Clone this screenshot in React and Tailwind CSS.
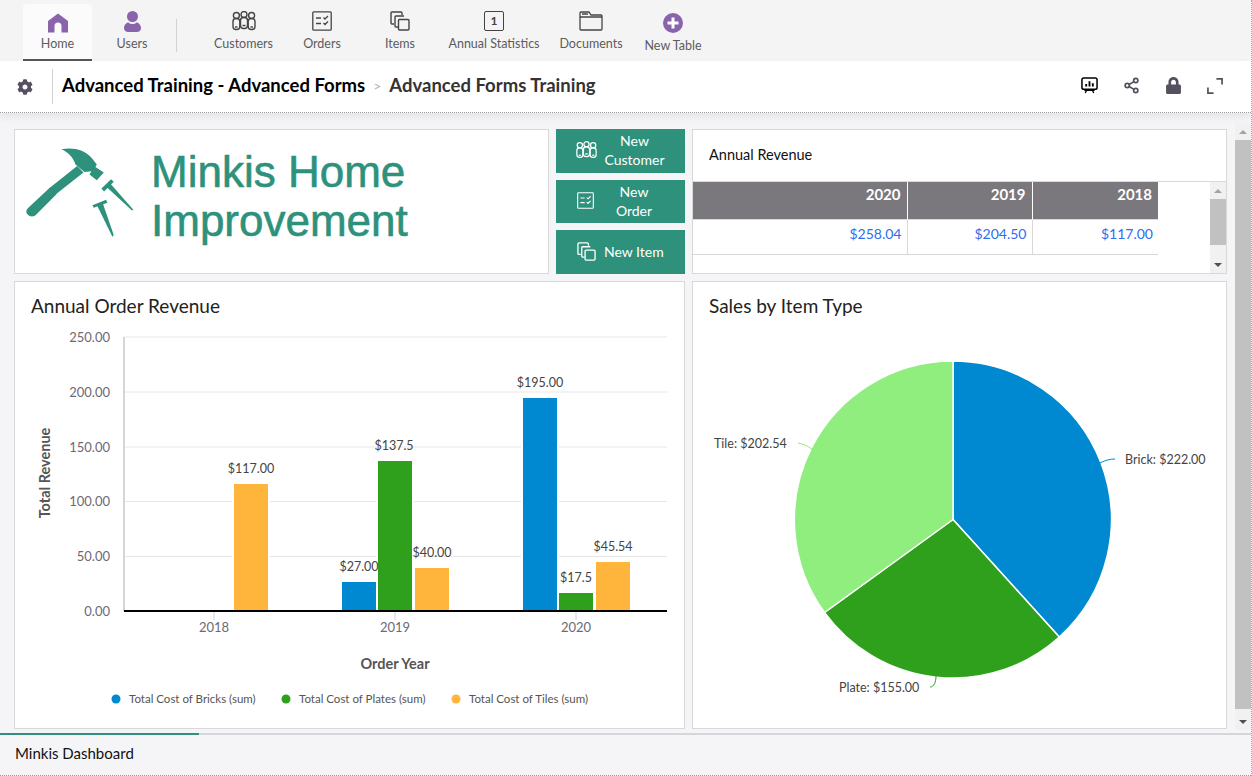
import { Share2 } from 'lucide-react';
import { FaCog, FaLock } from 'react-icons/fa';

const CustomersIcon = ({ className }) => (
  <svg viewBox="0 0 24 20" className={className} fill="none" stroke="currentColor" strokeWidth="1.4">
    <circle cx="4.4" cy="4.5" r="3" />
    <rect x="1" y="7.500" width="6.800" height="11" rx="3" />
    <path d="M3 16h2.500" />
    <circle cx="12" cy="3.500" r="3" />
    <rect x="8.500" y="6.500" width="7" height="11" rx="3" />
    <path d="M10.500 14.500h3" />
    <circle cx="19.600" cy="4.500" r="3" />
    <rect x="16.200" y="7.500" width="6.800" height="11" rx="3" />
    <path d="M18.500 16h2.500" />
  </svg>
);

const OrdersIcon = ({ className }) => (
  <svg viewBox="0 0 20 20" className={className} fill="none" stroke="currentColor" strokeWidth="1.3">
    <rect x="0.8" y="0.8" width="18.4" height="18.4" rx="1" />
    <path d="M4 7h5M4 12.5h5M11.5 6.5l1.5 1.5 3-3M11.5 12l1.5 1.5 3-3" />
  </svg>
);

const ItemsIcon = ({ className }) => (
  <svg viewBox="0 0 20 20" className={className} fill="none" stroke="currentColor" strokeWidth="1.4">
    <path d="M4 13H2a1 1 0 0 1-1-1V2a1 1 0 0 1 1-1h9a1 1 0 0 1 1 1v2" />
    <path d="M8 16H6a1 1 0 0 1-1-1V6a1 1 0 0 1 1-1h8" />
    <rect x="8.5" y="8.5" width="10.5" height="10.5" rx="1" />
  </svg>
);

const DocumentsIcon = ({ className }) => (
  <svg viewBox="0 0 24 20" className={className} fill="none" stroke="currentColor" strokeWidth="1.3">
    <path d="M1 18V2a1 1 0 0 1 1-1h8l2 3h10a1 1 0 0 1 1 1v13a1 1 0 0 1-1 1H2a1 1 0 0 1-1-1z" />
    <path d="M1 6h22M3 3h6" />
  </svg>
);

const HomeIcon = () => (
  <svg viewBox="0 0 20 20" className="w-5 h-5 text-[#8a63ad]" fill="currentColor">
    <path d="M10 0.5 L20 8 V19.5 H13.5 V13 a3.5 3.5 0 0 0 -7 0 V19.5 H0 V8 Z" />
  </svg>
);

const UserIcon = () => (
  <svg viewBox="0 0 17 21" className="w-[17px] h-[21px] text-[#8a63ad]" fill="currentColor">
    <circle cx="8.5" cy="5.5" r="5.5" />
    <path d="M0 17c0-3.5 3-5.5 4.500-5.500 1 1 2.500 1.500 4 1.500s3-.5 4-1.500c1.500 0 4.500 2 4.500 5.500 0 2.500-2 4-4 4H4c-2 0-4-1.500-4-4z" />
  </svg>
);

const NewTableIcon = () => (
  <svg viewBox="0 0 20 20" className="w-5 h-5">
    <circle cx="10" cy="10" r="10" fill="#8a63ad" />
    <path d="M10 4.500v11M4.500 10h11" stroke="#fff" strokeWidth="3" />
  </svg>
);

const PresentIcon = () => (
  <svg viewBox="0 0 18 18" className="w-[17px] h-[17px] text-black" fill="none" stroke="currentColor" strokeWidth="1.6">
    <rect x="1" y="1" width="16" height="12" rx="2" />
    <path d="M5.500 10V7.500M9 10V4.500M12.500 10V6.500" strokeWidth="2" />
    <path d="M6.500 13l-2 4M11.500 13l2 4M3.500 14h11" strokeWidth="1.4" />
  </svg>
);

const ExpandIcon = () => (
  <svg viewBox="0 0 17 17" className="w-4 h-4 text-[#55505f]" fill="none" stroke="currentColor" strokeWidth="1.8">
    <path d="M10 1h6v6M1 10v6h6" />
  </svg>
);

const HammerLogo = () => (
  <svg viewBox="40 60 340 290" className="w-[113px] h-[97px] shrink-0 -mt-[16px] text-[#2d917c]" fill="currentColor">
    <path d="M155 72C190 66 225 72 248 100L262 118 258 125 283 142 262 165 240 148 246 138 225 140 198 118C190 95 175 80 155 72Z" />
    <path d="M203 122 222 142 138 208 118 190Z" />
    <path d="M122 186 142 206 80 268C70 278 58 274 52 266 48 260 50 254 56 248Z" />
    <path d="M276 190 305 162 313 170 284 199Z" />
    <path d="M289 183 300 172 372 254 368 256Z" />
    <path d="M249 240 290 224 294 233 253 248Z" />
    <path d="M263 241 280 234 313 330 309 335Z" />
  </svg>
);

const navItems = [
  { label: 'Customers', width: 'w-[79px]', icon: <CustomersIcon className="w-6 h-5" /> },
  { label: 'Orders', width: 'w-[78px]', icon: <OrdersIcon className="w-5 h-5" /> },
  { label: 'Items', width: 'w-[78px]', icon: <ItemsIcon className="w-5 h-5" /> },
  {
    label: 'Annual Statistics',
    width: 'w-[110px]',
    icon: (
      <span className="w-5 h-5 flex items-center justify-center border-[1.5px] border-[#444] rounded-[2px] text-[12px] font-bold leading-none text-[#444]">
        1
      </span>
    ),
  },
  { label: 'Documents', width: 'w-[84px]', icon: <DocumentsIcon className="w-6 h-5" /> },
];

const bars = [
  { x: 234, top: 484, color: '#ffb43c' },
  { x: 342, top: 582, color: '#0089d0' },
  { x: 378, top: 461, color: '#2ea01c' },
  { x: 415, top: 568, color: '#ffb43c' },
  { x: 523, top: 398, color: '#0089d0' },
  { x: 559, top: 593, color: '#2ea01c' },
  { x: 596, top: 562, color: '#ffb43c' },
];

const barLabels = [
  { x: 251, y: 473, text: '$117.00' },
  { x: 359, y: 571, text: '$27.00' },
  { x: 394, y: 450, text: '$137.5' },
  { x: 432, y: 557, text: '$40.00' },
  { x: 540, y: 387, text: '$195.00' },
  { x: 576, y: 582, text: '$17.5' },
  { x: 613, y: 551, text: '$45.54' },
];

const yTicks = [
  { y: 337, label: '250.00' },
  { y: 392, label: '200.00' },
  { y: 447, label: '150.00' },
  { y: 501.5, label: '100.00' },
  { y: 556.5, label: '50.00' },
  { y: 611, label: '0.00' },
];

const xTicks = [
  { x: 214, label: '2018' },
  { x: 395, label: '2019' },
  { x: 576, label: '2020' },
];

const legend = [
  { x: 116, color: '#0089d0', label: 'Total Cost of Bricks (sum)' },
  { x: 286, color: '#2ea01c', label: 'Total Cost of Plates (sum)' },
  { x: 456, color: '#ffb43c', label: 'Total Cost of Tiles (sum)' },
];

function BarChart() {
  return (
    <svg viewBox="15 322 669 406" className="w-[669px] h-[406px] block">
      {yTicks.slice(0, 5).map((t) => (
        <line key={t.y} x1="124" x2="667" y1={t.y} y2={t.y} stroke="#e6e6e6" />
      ))}
      {yTicks.map((t) => (
        <text key={t.label} x="110" y={t.y + 4.5} textAnchor="end" fontSize="13" fill="#6e6874">
          {t.label}
        </text>
      ))}
      <line x1="124" x2="124" y1="337" y2="611" stroke="#d6d6d6" strokeWidth="2" />
      {xTicks.map((t) => (
        <g key={t.x}>
          <line x1={t.x} x2={t.x} y1="611" y2="620" stroke="#c9d2e0" />
          <text x={t.x} y="632" textAnchor="middle" fontSize="13" fill="#6e6874">
            {t.label}
          </text>
        </g>
      ))}
      {bars.map((b) => (
        <g key={b.x}>
          <rect x={b.x - 2} y={b.top} width="38" height={611 - b.top} fill="#fff" />
          <rect x={b.x} y={b.top} width="34" height={611 - b.top} fill={b.color} />
        </g>
      ))}
      <line x1="124" x2="667" y1="611" y2="611" stroke="#000" strokeWidth="2" />
      {barLabels.map((l) => (
        <text key={l.text} x={l.x} y={l.y} textAnchor="middle" fontSize="12.500" fill="#444">
          {l.text}
        </text>
      ))}
      <text x="50" y="473" transform="rotate(-90 50 473)" textAnchor="middle" fontSize="14.500" fontWeight="700" fill="#555">
        Total Revenue
      </text>
      <text x="395" y="669" textAnchor="middle" fontSize="14.500" fontWeight="700" fill="#555">
        Order Year
      </text>
      {legend.map((l) => (
        <g key={l.x}>
          <circle cx={l.x} cy="699" r="4.500" fill={l.color} />
          <text x={l.x + 13} y="703" fontSize="11.500" fill="#555">
            {l.label}
          </text>
        </g>
      ))}
    </svg>
  );
}

function PieChart() {
  return (
    <svg viewBox="693 322 533 406" className="w-[533px] h-[406px] block">
      <path d="M953 519.500V361A158.500 158.500 0 0 1 1059.300 637Z" fill="#0089d0" stroke="#fff" strokeWidth="1.500" />
      <path d="M953 519.500L1059.300 637A158.500 158.500 0 0 1 824.500 612.500Z" fill="#2ea01c" stroke="#fff" strokeWidth="1.500" />
      <path d="M953 519.500L824.500 612.500A158.500 158.500 0 0 1 953 361Z" fill="#90ee7e" stroke="#fff" strokeWidth="1.500" />
      <path d="M1100 463C1106 460 1110 459 1115 459" fill="none" stroke="#0089d0" />
      <path d="M798 443C803 444 808 446 812 449" fill="none" stroke="#90ee7e" />
      <path d="M936 676C936 682 934 687 930 687" fill="none" stroke="#2ea01c" />
      <text x="1125" y="464" fontSize="12.500" fill="#444">Brick: $222.00</text>
      <text x="714" y="448" fontSize="12.500" fill="#444">Tile: $202.54</text>
      <text x="839" y="692" fontSize="12.500" fill="#444">Plate: $155.00</text>
    </svg>
  );
}

function Scrollbar({ className, thumb }) {
  return (
    <div className={`flex flex-col items-center bg-[#f1f1f1] ${className}`}>
      <div className="h-[17px] shrink-0 flex items-center justify-center">
        <span className="border-x-[4px] border-x-transparent border-b-[4px] border-b-[#a3a3a3]" />
      </div>
      <div className={`w-full bg-[#c1c1c1] ${thumb}`} />
      <div className="flex-1" />
      <div className="h-[17px] shrink-0 flex items-center justify-center">
        <span className="border-x-[4px] border-x-transparent border-t-[4px] border-t-[#505050]" />
      </div>
    </div>
  );
}

export default function App() {
  return (
    <div className="w-[1252px] h-[776px] flex flex-col overflow-hidden bg-[#f5f5f7] [font-family:Lato,sans-serif] border-r border-dotted border-r-[#aaa]">
      {/* Nav */}
      <nav className="h-[61px] shrink-0 bg-[#f4f4f4] flex items-stretch pl-[23px] text-[12.500px] text-[#5c5c5c]">
        <div className="w-[69px] mt-1 flex flex-col items-center bg-[#fbfbfb] rounded-t-[4px] border-b-2 border-b-[#555]">
          <div className="h-5 mt-[9px]">
            <HomeIcon />
          </div>
          <span className="mt-[2px]">Home</span>
        </div>
        <div className="w-[80px] flex flex-col items-center pt-[11px]">
          <UserIcon />
          <span className="mt-[3px]">Users</span>
        </div>
        <div className="w-px h-[33px] mt-[19px] ml-1 mr-[27px] bg-[#d2d2d2]" />
        {navItems.map((item) => (
          <div key={item.label} className={`${item.width} flex flex-col items-center pt-[11px]`}>
            <div className="h-5 text-[#444]">{item.icon}</div>
            <span className="mt-1 whitespace-nowrap">{item.label}</span>
          </div>
        ))}
        <div className="w-[80px] flex flex-col items-center pt-[13px]">
          <NewTableIcon />
          <span className="mt-1 whitespace-nowrap">New Table</span>
        </div>
      </nav>

      {/* Title bar */}
      <header className="h-[52px] shrink-0 bg-white flex items-center border-b border-dotted border-b-[#999] shadow-[0_4px_8px_rgba(0,0,0,0.07)] z-10">
        <div className="w-[52px] flex justify-center pr-[2px] text-[#55505f]">
          <FaCog className="w-4 h-4" />
        </div>
        <div className="w-px h-[35px] bg-[#d2d2d2]" />
        <h1 className="ml-[9px] -mt-[2px] text-[18.500px] font-bold text-black whitespace-nowrap">Advanced Training - Advanced Forms</h1>
        <span className="mx-2 -mt-[2px] text-[14px] text-[#b5b5b5]">&gt;</span>
        <h2 className="-mt-[2px] text-[18.500px] font-bold text-[#333] whitespace-nowrap">Advanced Forms Training</h2>
        <div className="ml-auto -mt-[2px] flex items-center gap-[25px] pr-[28px] text-[#55505f]">
          <PresentIcon />
          <Share2 className="w-[17px] h-[17px]" strokeWidth={2.4} />
          <FaLock className="w-[17px] h-[17px]" />
          <ExpandIcon />
        </div>
      </header>

      {/* Dashboard */}
      <main className="h-[620px] shrink-0 flex">
        <div className="w-[1221px] pl-[14px] pt-4 flex gap-[7px]">
          <div className="w-[671px] flex flex-col gap-[7px]">
            <div className="h-[145px] flex gap-[7px]">
              <div className="w-[535px] bg-white border border-[#d8d8da] flex items-center pl-[8px]">
                <HammerLogo />
                <div className="ml-[15px] -mt-[12px] [font-family:Liberation_Sans,Arial,sans-serif] text-[44px] leading-[49px] text-[#2d917c] [-webkit-text-stroke:0.6px_#2d917c] whitespace-nowrap">
                  <div>Minkis Home</div>
                  <div>Improvement</div>
                </div>
              </div>
              <div className="w-[129px] flex flex-col justify-between text-white text-[14px] leading-[19px]">
                <button className="h-11 pb-[2px] bg-[#2d917c] flex items-center pl-5">
                  <CustomersIcon className="w-[21px] h-[18px] shrink-0" />
                  <span className="w-[76px] ml-[-1px] pl-[1px] text-center">New Customer</span>
                </button>
                <button className="h-[43px] pb-[2px] bg-[#2d917c] flex items-center pl-[21px]">
                  <OrdersIcon className="w-[17px] h-[17px] shrink-0" />
                  <span className="w-[76px] ml-[2px] px-4 text-center">New Order</span>
                </button>
                <button className="h-11 pb-[2px] bg-[#2d917c] flex items-center pl-[21px]">
                  <ItemsIcon className="w-[19px] h-[19px] shrink-0" />
                  <span className="ml-2 whitespace-nowrap">New Item</span>
                </button>
              </div>
            </div>
            <section className="h-[448px] bg-white border border-[#d8d8da]">
              <h3 className="h-10 pl-4 pt-[11px] text-[19px] leading-[26px] text-[#222]">Annual Order Revenue</h3>
              <BarChart />
            </section>
          </div>
          <div className="w-[535px] flex flex-col gap-[7px]">
            <section className="h-[145px] bg-white border border-[#d8d8da] flex flex-col">
              <div className="h-[52px] shrink-0 pl-4 pb-[2px] flex items-center text-[14.500px] text-[#111] border-b border-b-[#d8d8da]">
                Annual Revenue
              </div>
              <div className="flex-1 flex min-h-0">
                <table className="w-[465px] h-fit table-fixed border-collapse text-right text-[14px]">
                  <colgroup>
                    <col className="w-[214px]" />
                    <col className="w-[125px]" />
                    <col className="w-[126px]" />
                  </colgroup>
                  <thead>
                    <tr className="h-[37px] bg-[#7a777d] text-white font-bold text-[15px] align-top">
                      <th className="pr-[6px] pt-[1px]">2020</th>
                      <th className="pr-[6px] pt-[1px] border-l border-l-white">2019</th>
                      <th className="pr-[6px] pt-[1px] border-l border-l-white">2018</th>
                    </tr>
                  </thead>
                  <tbody>
                    <tr className="h-[35px] text-[#2e6df0] border-y border-y-[#d8d8da] align-top">
                      <td className="pr-[5px] pt-[3px]">$258.04</td>
                      <td className="pr-[5px] pt-[3px] border-l border-l-[#d8d8da]">$204.50</td>
                      <td className="pr-[5px] pt-[3px] border-l border-l-[#d8d8da]">$117.00</td>
                    </tr>
                  </tbody>
                </table>
                <div className="flex-1" />
                <Scrollbar className="w-4" thumb="h-[46px]" />
              </div>
            </section>
            <section className="h-[448px] bg-white border border-[#d8d8da]">
              <h3 className="h-10 pl-4 pt-[11px] text-[19px] leading-[26px] text-[#222]">Sales by Item Type</h3>
              <PieChart />
            </section>
          </div>
        </div>
        <Scrollbar className="w-4 ml-[14px] mt-[10px] mb-[3px]" thumb="h-[569px]" />
      </main>

      {/* Tabs */}
      <footer className="h-[43px] shrink-0 flex flex-col border-b border-dotted border-b-[#999]">
        <div className="h-[2px] bg-[#d6d6da]">
          <div className="w-[199px] h-full bg-[#2d917c]" />
        </div>
        <div className="pl-[15px] pt-[7px] text-[15px] text-[#111]">Minkis Dashboard</div>
      </footer>
    </div>
  );
}
